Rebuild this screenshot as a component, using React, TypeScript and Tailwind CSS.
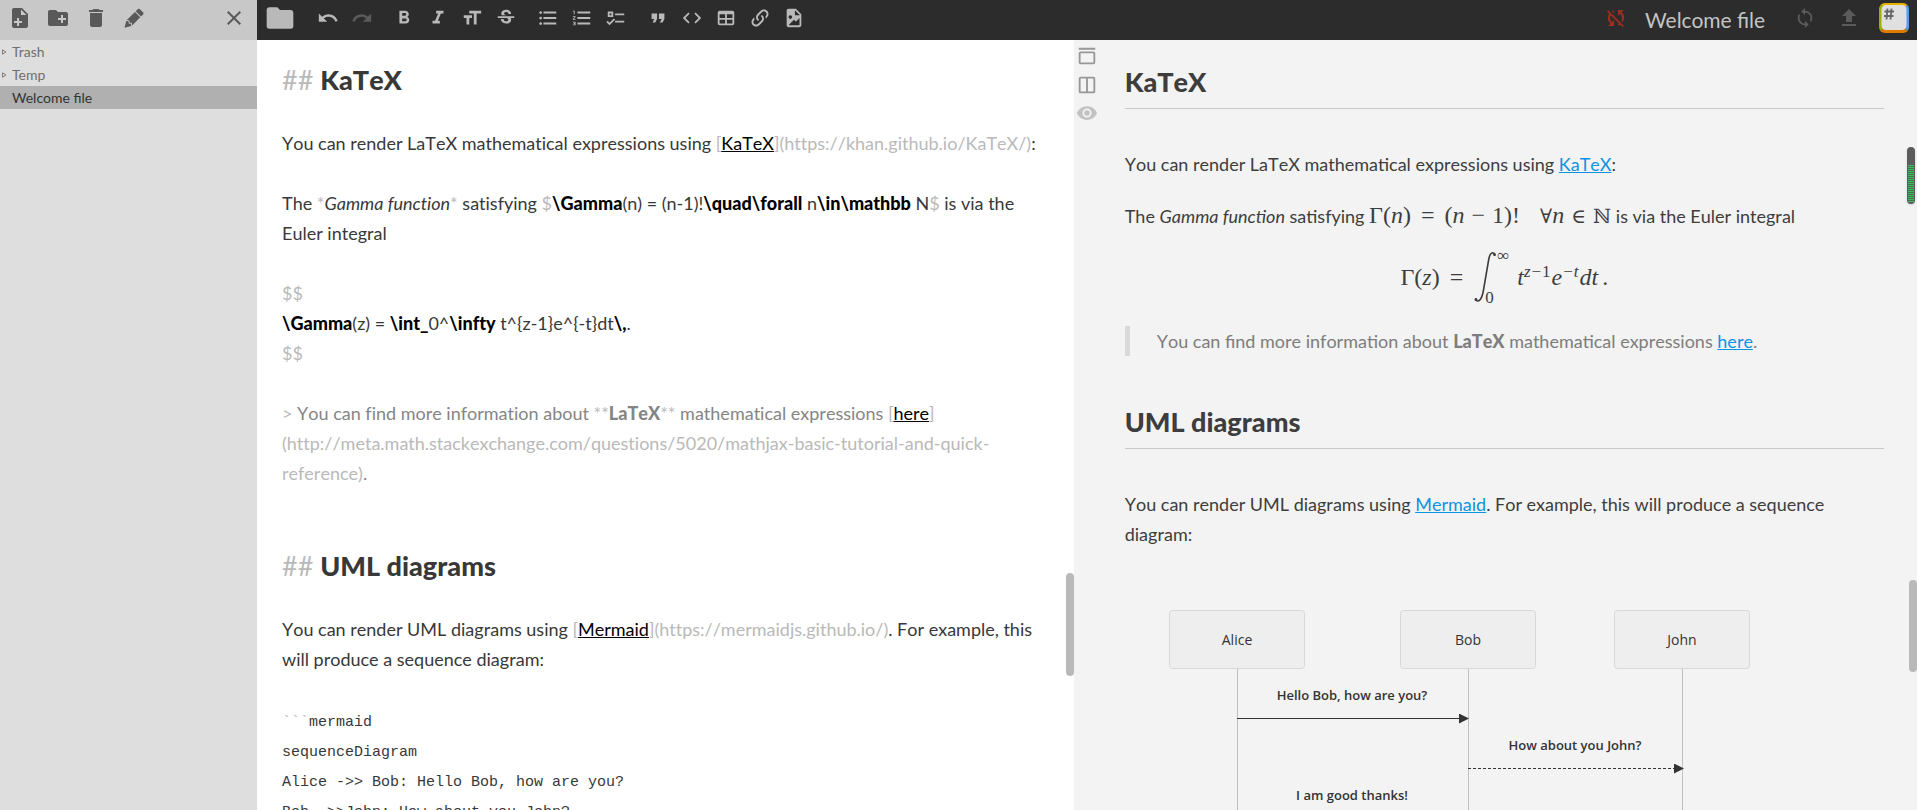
import { useState, type ReactNode } from 'react';
import {
  MdFormatListBulleted,
  MdFormatListNumbered,
  MdStrikethroughS,
  MdSyncDisabled,
} from 'react-icons/md';

const paths = {
  filePlus:
    'M13,9H18.5L13,3.5V9M6,2H14L20,8V20A2,2 0 0,1 18,22H6C4.89,22 4,21.1 4,20V4C4,2.89 4.89,2 6,2M11,15V12H9V15H6V17H9V20H11V17H14V15H11Z',
  folderPlus:
    'M10,4L12,6H20A2,2 0 0,1 22,8V18A2,2 0 0,1 20,20H4C2.89,20 2,19.1 2,18V6C2,4.89 2.89,4 4,4H10M15,9V12H12V14H15V17H17V14H20V12H17V9H15Z',
  trash:
    'M19,4H15.5L14.5,3H9.5L8.5,4H5V6H19M6,19A2,2 0 0,0 8,21H16A2,2 0 0,0 18,19V7H6V19Z',
  pencil:
    'M16.84,2.73C16.45,2.73 16.07,2.88 15.77,3.17L13.65,5.29L18.95,10.6L21.07,8.5C21.67,7.89 21.67,6.94 21.07,6.36L17.9,3.17C17.6,2.88 17.22,2.73 16.84,2.73M12.94,6L4.84,14.11L7.4,14.39L7.58,16.68L9.86,16.85L10.15,19.41L18.25,11.3M4.25,15.04L2.5,21.73L9.2,19.94L8.96,17.78L6.65,17.61L6.47,15.29',
  close:
    'M19,6.41L17.59,5L12,10.59L6.41,5L5,6.41L10.59,12L5,17.59L6.41,19L12,13.41L17.59,19L19,17.59L13.41,12L19,6.41Z',
  folder:
    'M10,4H4C2.89,4 2,4.89 2,6V18A2,2 0 0,0 4,20H20A2,2 0 0,0 22,18V8C22,6.89 21.1,6 20,6H12L10,4Z',
  undo: 'M12.5,8C9.85,8 7.45,9 5.6,10.6L2,7V16H11L7.38,12.38C8.77,11.22 10.54,10.5 12.5,10.5C16.04,10.5 19.1,12.81 20.15,16L22.52,15.22C21.13,11.03 17.15,8 12.5,8Z',
  redo: 'M18.4,10.6C16.55,9 14.15,8 11.5,8C6.85,8 2.92,11.03 1.54,15.22L3.9,16C4.95,12.81 7.95,10.5 11.5,10.5C13.45,10.5 15.23,11.22 16.62,12.38L13,16H22V7L18.4,10.6Z',
  bold: 'M13.5,15.5H10V12.5H13.5A1.5,1.5 0 0,1 15,14A1.5,1.5 0 0,1 13.5,15.5M10,6.5H13A1.5,1.5 0 0,1 14.5,8A1.5,1.5 0 0,1 13,9.5H10M15.6,10.79C16.57,10.11 17.25,9 17.25,8C17.25,5.74 15.5,4 13.25,4H7V18H14.04C16.14,18 17.75,16.3 17.75,14.21C17.75,12.69 16.89,11.39 15.6,10.79Z',
  italic: 'M10,4V7H12.21L8.79,15H6V18H14V15H11.79L15.21,7H18V4H10Z',
  size: 'M3,12H6V19H9V12H12V9H3M9,4V7H14V19H17V7H22V4H9Z',
  checks:
    'M3,5H9V11H3V5M5,7V9H7V7H5M11,7H21V9H11V7M11,15H21V17H11V15M5,20L1.5,16.5L2.91,15.09L5,17.17L9.59,12.59L11,14L5,20Z',
  quote: 'M14,17H17L19,13V7H13V13H16M6,17H9L11,13V7H5V13H8L6,17Z',
  code: 'M14.6,16.6L19.2,12L14.6,7.4L16,6L22,12L16,18L14.6,16.6M9.4,16.6L4.8,12L9.4,7.4L8,6L2,12L8,18L9.4,16.6Z',
  table:
    'M5,4H19A2,2 0 0,1 21,6V18A2,2 0 0,1 19,20H5A2,2 0 0,1 3,18V6A2,2 0 0,1 5,4M5,8V12H11V8H5M13,8V12H19V8H13M5,14V18H11V14H5M13,14V18H19V14H13Z',
  link: 'M10.59,13.41C11,13.8 11,14.44 10.59,14.83C10.2,15.22 9.56,15.22 9.17,14.83C7.22,12.88 7.22,9.71 9.17,7.76L12.71,4.22C14.66,2.27 17.83,2.27 19.78,4.22C21.73,6.17 21.73,9.34 19.78,11.29L18.29,12.78C18.3,11.96 18.17,11.14 17.89,10.36L18.36,9.88C19.54,8.71 19.54,6.81 18.36,5.64C17.19,4.46 15.29,4.46 14.12,5.64L10.59,9.17C9.41,10.34 9.41,12.24 10.59,13.41M13.41,9.17C13.8,8.78 14.44,8.78 14.83,9.17C16.78,11.12 16.78,14.29 14.83,16.24L11.29,19.78C9.34,21.73 6.17,21.73 4.22,19.78C2.27,17.83 2.27,14.66 4.22,12.71L5.71,11.22C5.7,12.04 5.83,12.86 6.11,13.65L5.64,14.12C4.46,15.29 4.46,17.19 5.64,18.36C6.81,19.54 8.71,19.54 9.88,18.36L13.41,14.83C14.59,13.66 14.59,11.76 13.41,10.59C13,10.2 13,9.56 13.41,9.17Z',
  image:
    'M13,9H18.5L13,3.5V9M6,2H14L20,8V20A2,2 0 0,1 18,22H6C4.89,22 4,21.1 4,20V4C4,2.89 4.89,2 6,2M6,20H18V12L14,16L12,14L6,20M8,9A2,2 0 0,0 6,11A2,2 0 0,0 8,13A2,2 0 0,0 10,11A2,2 0 0,0 8,9Z',
  sync: 'M12,18A6,6 0 0,1 6,12C6,11 6.25,10.03 6.7,9.2L5.24,7.74C4.46,8.97 4,10.43 4,12A8,8 0 0,0 12,20V23L16,19L12,15M12,4V1L8,5L12,9V6A6,6 0 0,1 18,12C18,13 17.75,13.97 17.3,14.8L18.76,16.26C19.54,15.03 20,13.57 20,12A8,8 0 0,0 12,4Z',
  upload: 'M9,16V10H5L12,3L19,10H15V16H9M5,20V18H19V20H5Z',
  navBar:
    'M3,2H21V4H3V2M5,6H19A2,2 0 0,1 21,8V18A2,2 0 0,1 19,20H5A2,2 0 0,1 3,18V8A2,2 0 0,1 5,6M5,8V18H19V8H5Z',
  split:
    'M5,3H19A2,2 0 0,1 21,5V19A2,2 0 0,1 19,21H5A2,2 0 0,1 3,19V5A2,2 0 0,1 5,3M5,5V19H11V5H5M13,5V19H19V5H13Z',
  eye: 'M12,9A3,3 0 0,0 9,12A3,3 0 0,0 12,15A3,3 0 0,0 15,12A3,3 0 0,0 12,9M12,17A5,5 0 0,1 7,12A5,5 0 0,1 12,7A5,5 0 0,1 17,12A5,5 0 0,1 12,17M12,4.5C7,4.5 2.73,7.61 1,12C2.73,16.39 7,19.5 12,19.5C17,19.5 21.27,16.39 23,12C21.27,7.61 17,4.5 12,4.5Z',
};

type IconName = keyof typeof paths;

function Icon({ name, className = 'size-[22px]' }: { name: IconName; className?: string }) {
  return (
    <svg viewBox="0 0 24 24" className={className} fill="currentColor" aria-hidden="true">
      <path d={paths[name]} />
    </svg>
  );
}

function ToolButton({ label, children, dim }: { label: string; children: ReactNode; dim?: boolean }) {
  return (
    <button
      type="button"
      aria-label={label}
      disabled={dim}
      className="flex h-9 w-[34px] items-center justify-center text-[#b9b9b9] disabled:text-[#5b5b5b]"
    >
      {children}
    </button>
  );
}

function Logo() {
  return (
    <svg viewBox="0 0 30 30" className="size-[30px]" aria-hidden="true">
      <defs>
        <clipPath id="logo-clip">
          <rect width="30" height="30" rx="6" />
        </clipPath>
      </defs>
      <g clipPath="url(#logo-clip)">
        <path d="M0 0H30L15 15Z" fill="#e6b400" />
        <path d="M0 0L15 15L0 30Z" fill="#9bb000" />
        <path d="M30 0V30L15 15Z" fill="#5b9be6" />
        <path d="M0 30L15 15L30 30Z" fill="#e07b00" />
        <rect x="2.5" y="2" width="25" height="25" rx="4.5" fill="#e0e0e0" />
      </g>
      <path d="M8.5 5.5L7.5 16.5M12.5 5.5L11.5 16.5M5.5 8.5H15M5 13H14.5" stroke="#666" strokeWidth="1.8" />
    </svg>
  );
}

const files = [
  { name: 'Trash', folder: true },
  { name: 'Temp', folder: true },
  { name: 'Welcome file', folder: false },
];

function Explorer() {
  const [selected, setSelected] = useState('Welcome file');
  return (
    <aside className="w-[257px] shrink-0 bg-[#dedede]">
      <div className="flex h-10 items-start gap-[14px] bg-[#c8c8c8] pt-[6px] pr-[11px] pl-2 text-[#595959]">
        <button type="button" aria-label="New file">
          <Icon name="filePlus" className="size-6" />
        </button>
        <button type="button" aria-label="New folder">
          <Icon name="folderPlus" className="size-6" />
        </button>
        <button type="button" aria-label="Delete">
          <Icon name="trash" className="size-6" />
        </button>
        <button type="button" aria-label="Rename">
          <Icon name="pencil" className="size-6" />
        </button>
        <button type="button" aria-label="Close explorer" className="ml-auto">
          <Icon name="close" className="size-6" />
        </button>
      </div>
      <ul className="text-sm leading-[23px] text-[#6f6f6f]">
        {files.map((f) => (
          <li key={f.name} className={selected === f.name ? 'bg-[#b0b0b0] text-[#333]' : ''}>
            <button type="button" onClick={() => setSelected(f.name)} className="flex w-full items-center text-left">
              <span className="flex w-3 shrink-0 pl-[2px]">
                {f.folder && (
                  <svg viewBox="0 0 5 6" className="h-[6px] w-[5px]" aria-hidden="true">
                    <path d="M.5 .8L4 3L.5 5.2Z" fill="none" stroke="#7d7d7d" />
                  </svg>
                )}
              </span>
              {f.name}
            </button>
          </li>
        ))}
      </ul>
    </aside>
  );
}

function NavBar() {
  const [title, setTitle] = useState('Welcome file');
  return (
    <header className="flex h-10 shrink-0 items-start bg-[#2c2c2c] pr-2">
      <button type="button" aria-label="Toggle explorer" className="mr-[15px] ml-[7px] pt-[2px] text-[#b9b9b9]">
        <Icon name="folder" className="size-8" />
      </button>
      <div className="flex gap-2">
        <div className="flex">
          <ToolButton label="Undo"><Icon name="undo" /></ToolButton>
          <ToolButton label="Redo" dim><Icon name="redo" /></ToolButton>
        </div>
        <div className="flex">
          <ToolButton label="Bold"><Icon name="bold" /></ToolButton>
          <ToolButton label="Italic"><Icon name="italic" /></ToolButton>
          <ToolButton label="Heading"><Icon name="size" /></ToolButton>
          <ToolButton label="Strikethrough"><MdStrikethroughS size={22} /></ToolButton>
        </div>
        <div className="flex">
          <ToolButton label="Unordered list"><MdFormatListBulleted size={22} /></ToolButton>
          <ToolButton label="Ordered list"><MdFormatListNumbered size={22} /></ToolButton>
          <ToolButton label="Check list"><Icon name="checks" /></ToolButton>
        </div>
        <div className="flex">
          <ToolButton label="Blockquote"><Icon name="quote" /></ToolButton>
          <ToolButton label="Code"><Icon name="code" /></ToolButton>
          <ToolButton label="Table"><Icon name="table" /></ToolButton>
          <ToolButton label="Link"><Icon name="link" /></ToolButton>
          <ToolButton label="Image"><Icon name="image" /></ToolButton>
        </div>
      </div>
      <div className="ml-auto flex items-start">
        <button type="button" aria-label="Synchronization disabled" className="flex h-9 items-center text-[#9b2f20]">
          <MdSyncDisabled size={24} />
        </button>
        <input
          aria-label="File name"
          value={title}
          onChange={(e) => setTitle(e.target.value)}
          className="ml-[17px] h-[38px] w-[129px] bg-transparent text-[21px] text-[#c4c4c4] outline-none"
        />
        <div className="ml-[14px] flex gap-[10px]">
          <ToolButton label="Synchronize" dim><Icon name="sync" /></ToolButton>
          <ToolButton label="Publish" dim><Icon name="upload" className="size-6" /></ToolButton>
        </div>
        <button type="button" aria-label="Menu" className="ml-[13px] pt-[3px]">
          <Logo />
        </button>
      </div>
    </header>
  );
}

// Markdown punctuation, drawn fainter than the text
function M({ children }: { children: ReactNode }) {
  return <span className="text-[#b9b9b9]">{children}</span>;
}

// LaTeX command
function K({ children }: { children: ReactNode }) {
  return <span className="font-black text-black">{children}</span>;
}

function MdLink({ text, url }: { text: string; url: string }) {
  return (
    <>
      <M>[</M>
      <span className="text-black underline">{text}</span>
      <M>]({url})</M>
    </>
  );
}

function EditorHeading({ children }: { children: ReactNode }) {
  return (
    <h2 className="pt-[30px] text-[27px] leading-9 font-black">
      <span className="font-normal text-[#b9b9b9]">## </span>
      {children}
    </h2>
  );
}

function Editor() {
  return (
    <section
      aria-label="Editor"
      className="relative w-[49.2%] shrink-0 overflow-hidden bg-white pr-7 pl-[25px] text-[#383838] [font-kerning:none] [font-variant-ligatures:no-common-ligatures]"
    >
      <div className="-mt-2 flex flex-col gap-[30px]">
        <EditorHeading>KaTeX</EditorHeading>
        <p>
          You can render LaTeX mathematical expressions using{' '}
          <MdLink text="KaTeX" url="https://khan.github.io/KaTeX/" />:
        </p>
        <p>
          The <M>*</M>
          <em>Gamma function</em>
          <M>*</M> satisfying <M>$</M>
          <K>\Gamma</K>(n) = (n-1)!<K>\quad\forall</K> n<K>\in\mathbb</K> N<M>$</M> is via the Euler integral
        </p>
        <p>
          <M>$$</M>
          <br />
          <K>\Gamma</K>(z) = <K>\int_</K>0^<K>\infty</K> t^{'{z-1}'}e^{'{-t}'}dt<K>\,</K>.
          <br />
          <M>$$</M>
        </p>
        <p className="text-[#858585]">
          <M>&gt;</M> You can find more information about <M>**</M>
          <strong className="font-black">LaTeX</strong>
          <M>**</M> mathematical expressions{' '}
          <MdLink
            text="here"
            url="http://meta.math.stackexchange.com/questions/5020/mathjax-basic-tutorial-and-quick-reference"
          />
          .
        </p>
        <EditorHeading>UML diagrams</EditorHeading>
        <p>
          You can render UML diagrams using <MdLink text="Mermaid" url="https://mermaidjs.github.io/" />. For
          example, this will produce a sequence diagram:
        </p>
        <pre className="pt-1 font-['Liberation_Mono',monospace] text-[15px]">
          <M>```</M>
          {'mermaid\nsequenceDiagram\nAlice ->> Bob: Hello Bob, how are you?\nBob-->>John: How about you John?'}
        </pre>
      </div>
      <div className="absolute top-[533px] right-0 h-[103px] w-2 rounded bg-[#b9b9b9]" />
    </section>
  );
}

function Heading({ children }: { children: ReactNode }) {
  return <h2 className="border-b border-[#c9c9c9] pb-2 text-[27px] leading-9 font-black">{children}</h2>;
}

function A({ href, children }: { href: string; children: ReactNode }) {
  return (
    <a href={href} className="text-[#0c93e4] underline">
      {children}
    </a>
  );
}

function Sup({ children }: { children: ReactNode }) {
  return <sup className="pr-px text-[17px] leading-none">{children}</sup>;
}

const actors = [
  { name: 'Alice', x: 112 },
  { name: 'Bob', x: 343 },
  { name: 'John', x: 557 },
];

function SequenceDiagram() {
  return (
    <svg className="mt-[49px] h-[420px] w-full font-['Open_Sans',sans-serif]" fill="#333" textAnchor="middle">
      <defs>
        <marker id="head" viewBox="0 0 10 10" refX="9" refY="5" markerWidth="10" markerHeight="10" markerUnits="userSpaceOnUse">
          <path d="M0 0L10 5L0 10Z" fill="#333" />
        </marker>
      </defs>
      {actors.map((a) => (
        <g key={a.name} className="text-sm">
          <path d={`M${a.x}.5 71V420`} stroke="#c0c0c0" />
          <rect x={a.x - 67.5} y="12.5" width="135" height="58" rx="3" fill="#eee" stroke="#d8d8d8" />
          <text x={a.x} y="47">{a.name}</text>
        </g>
      ))}
      <g className="text-[13px] font-semibold">
        <text x="227" y="102">Hello Bob, how are you?</text>
        <text x="450" y="152">How about you John?</text>
        <text x="227" y="202">I am good thanks!</text>
      </g>
      <path d="M112 120.5H343" stroke="#333" markerEnd="url(#head)" />
      <path d="M343 170.5H558" stroke="#333" strokeDasharray="3 2" markerEnd="url(#head)" />
    </svg>
  );
}

function Preview() {
  return (
    <section
      aria-label="Preview"
      className="relative flex min-w-0 flex-1 overflow-hidden bg-[#f3f3f3] text-[#3d3d3d] [font-kerning:none]"
    >
      <div className="flex w-[51px] shrink-0 flex-col gap-[6px] pt-[6px] pl-[2px] text-[#979797]">
        <button type="button" aria-label="Toggle navigation bar" className="w-[22px]">
          <Icon name="navBar" />
        </button>
        <button type="button" aria-label="Toggle side preview" className="w-[22px]">
          <Icon name="split" />
        </button>
        <button type="button" aria-label="Reader mode" className="w-[22px] text-[#c2c2c2]">
          <Icon name="eye" />
        </button>
      </div>
      <div className="min-w-0 flex-1 pt-6 pr-[33px]">
        <Heading>KaTeX</Heading>
        <p className="mt-10">
          You can render LaTeX mathematical expressions using <A href="https://khan.github.io/KaTeX/">KaTeX</A>:
        </p>
        <p className="mt-[22px]">
          The <em>Gamma function</em> satisfying{' '}
          <span className="font-['Liberation_Serif',serif] text-2xl leading-none">
            Γ(<i>n</i>)<span className="px-[10px]">=</span>(<i>n</i>
            <span className="px-[7px]">−</span>1)!
            <span className="pl-5 font-['DejaVu_Serif',serif] text-xl leading-none">∀</span>
            <i>n</i>
            <span className="px-[7px] font-['DejaVu_Serif',serif] text-xl leading-none">∈</span>
            <span className="font-['DejaVu_Serif',serif] text-xl leading-none">ℕ</span>
          </span>{' '}
          is via the Euler integral
        </p>
        <div className="mt-[15px] flex h-[62px] items-center justify-center font-['Liberation_Serif',serif] text-2xl">
          <span>
            Γ(<i>z</i>)<span className="px-[10px]">=</span>
          </span>
          <svg viewBox="0 0 24 52" className="h-[52px] w-6" aria-hidden="true">
            <path
              d="M22 3.5C20 .5 17 1.5 15.8 8L10.5 39C9 48 6 52 2.5 49"
              fill="none"
              stroke="currentColor"
              strokeWidth="1.6"
              strokeLinecap="round"
            />
            <circle cx="21.5" cy="3.8" r="1.4" fill="currentColor" />
            <circle cx="3" cy="48.5" r="1.4" fill="currentColor" />
          </svg>
          <span className="-ml-3 flex h-[62px] w-8 flex-col justify-between text-[17px] leading-5">
            <span className="pl-3">∞</span>
            <span>0</span>
          </span>
          <span>
            <i>t</i>
            <Sup>
              <i>z</i>
              <span className="px-px">−</span>1
            </Sup>
            <i>e</i>
            <Sup>
              <span className="px-px">−</span>
              <i>t</i>
            </Sup>
            <i>dt</i>
            <span className="pl-1">.</span>
          </span>
        </div>
        <blockquote className="mt-[18px] border-l-[5px] border-[#d9d9d9] pl-[27px] text-[#7d7d7d]">
          You can find more information about <strong className="font-black">LaTeX</strong> mathematical expressions{' '}
          <A href="http://meta.math.stackexchange.com/questions/5020/mathjax-basic-tutorial-and-quick-reference">
            here
          </A>
          .
        </blockquote>
        <div className="mt-12">
          <Heading>UML diagrams</Heading>
        </div>
        <p className="mt-10">
          You can render UML diagrams using <A href="https://mermaidjs.github.io/">Mermaid</A>. For example, this will
          produce a sequence diagram:
        </p>
        <SequenceDiagram />
      </div>
      {/* scroll position markers */}
      <div className="absolute top-[107px] right-[2px] flex h-[57px] w-2 flex-col rounded bg-[#5c5c5c] px-px pt-[18px] pb-[2px] shadow">
        <div className="flex-1 bg-[repeating-linear-gradient(#3fbf62_0px_1px,#4a6b52_1px_2px)]" />
      </div>
      <div className="absolute top-[540px] right-0 h-[92px] w-2 rounded bg-[#b9b9b9]" />
    </section>
  );
}

export default function App() {
  return (
    <div className="flex h-screen overflow-hidden font-[Lato,sans-serif] text-lg leading-[30px]">
      <Explorer />
      <div className="flex min-w-0 flex-1 flex-col">
        <NavBar />
        <main className="flex min-h-0 flex-1">
          <Editor />
          <Preview />
        </main>
      </div>
    </div>
  );
}
